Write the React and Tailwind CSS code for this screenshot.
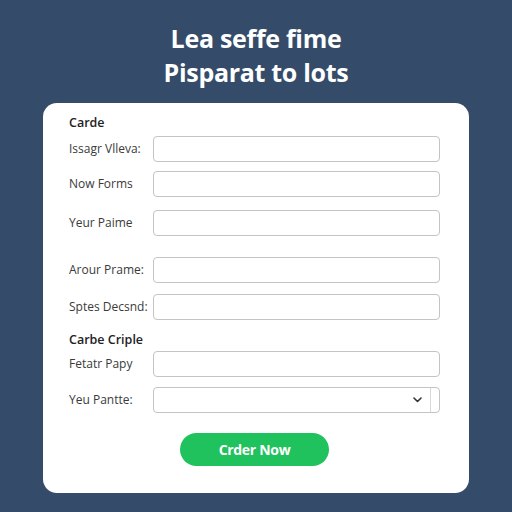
import React from 'react';

const Field = ({ label, className = '', select = false }) => (
    <div className={`flex h-[26px] items-center ${className}`}>
        <label className="w-[84px] shrink-0 text-[12px] leading-[16px] text-[#3a3a3a]">{label}</label>
        {select ? (
            <div className="relative flex h-[26px] flex-1 items-center rounded-[4px] border border-[#c4c4c4] bg-white">
                <svg className="absolute right-[17px]" width="9" height="6" viewBox="0 0 9 6" fill="none">
                    <path d="M1 1l3.5 3.5L8 1" stroke="#333" strokeWidth="1.6" strokeLinecap="round" strokeLinejoin="round" />
                </svg>
                <div className="absolute right-[8px] top-0 h-full w-px bg-[#d8d8d8]" />
            </div>
        ) : (
            <input type="text" className="block h-[26px] min-w-0 flex-1 rounded-[4px] border border-[#c4c4c4] bg-white p-0 outline-none" />
        )}
    </div>
);

const App = () => {
    return (
        <div className="flex min-h-[512px] w-[512px] flex-col items-center bg-[#344c6a] pt-[21px]" style={{ fontFamily: '"Open Sans", "Liberation Sans", sans-serif' }}>
            <h1 className="text-center text-[25px] font-bold leading-[34px] tracking-[-0.3px] text-white">
                Lea seffe fime
                <br />
                Pisparat to lots
            </h1>

            <div className="mt-[14px] flex h-[390px] w-[426px] flex-col rounded-[14px] bg-white pl-[26px] pr-[29px] pt-[11px]">
                <p className="text-[12.5px] font-semibold leading-[18px] text-[#222]">Carde</p>
                <Field label="Issagr Vlleva:" className="mt-[4px]" />
                <Field label="Now Forms" className="mt-[9px]" />
                <Field label="Yeur Paime" className="mt-[13px]" />
                <Field label="Arour Prame:" className="mt-[21px]" />
                <Field label="Sptes Decsnd:" className="mt-[11px]" />
                <p className="mt-[11px] text-[12.5px] font-semibold leading-[18px] text-[#222]">Carbe Criple</p>
                <Field label="Fetatr Papy" className="mt-[2px]" />
                <Field label="Yeu Pantte:" className="mt-[10px]" select />

                <div className="mt-[20px] flex justify-center">
                    <button className="h-[33px] w-[149px] rounded-full bg-[#1fc25c] text-[14px] font-bold tracking-[-0.3px] text-white">
                        Crder Now
                    </button>
                </div>
            </div>
        </div>
    );
};

export default App;
